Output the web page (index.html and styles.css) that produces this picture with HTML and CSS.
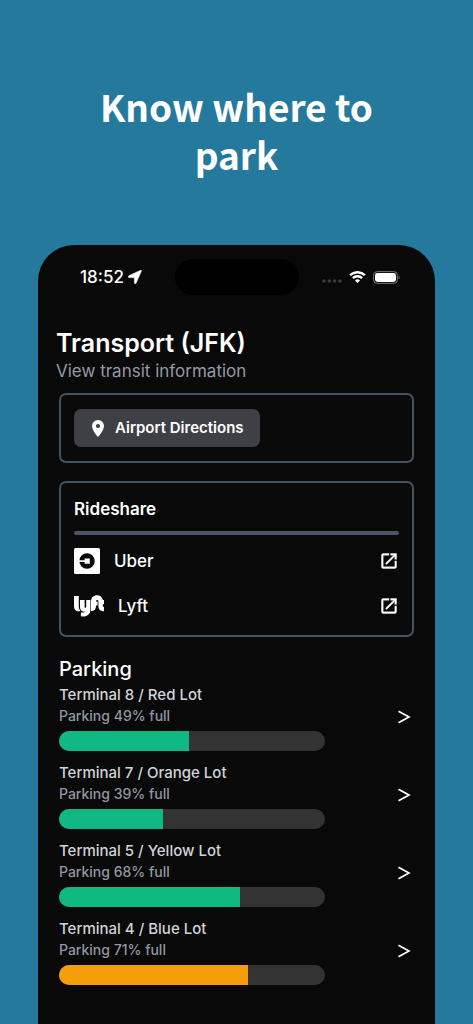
FILE: index.html
```html
<!DOCTYPE html>
<html lang="en">
<head>
<meta charset="utf-8">
<meta name="viewport" content="width=device-width, initial-scale=1">
<title>Know where to park</title>
<link rel="stylesheet" href="styles.css">
</head>
<body>
<svg class="defs" aria-hidden="true">
  <symbol id="open" viewBox="0 0 24 24"><path d="M19 19H5V5h7V3H5a2 2 0 0 0-2 2v14a2 2 0 0 0 2 2h14c1.100 0 2-.9 2-2v-7h-2v7zM14 3v2h3.590l-9.830 9.830 1.410 1.410L19 6.410V10h2V3h-7z" stroke="currentColor" stroke-width=".5"/></symbol>
  <symbol id="next" viewBox="0 0 14 14"><path d="M1.500 1.200 12 7 1.500 12.800" fill="none" stroke="currentColor" stroke-width="1.700"/></symbol>
</svg>
<header class="hero"><h1 class="headline">Know where to park</h1></header>
<div class="phone">
  <div class="status">
    <div class="clock">
      <span>18:52</span>
      <svg class="locate" viewBox="0 0 14 14" aria-hidden="true"><path d="M13.400.9c.3-.6-.1-.8-.6-.6L.9 5.700c-.9.400-.7 1.900.2 1.900h5c.2 0 .3.100.3.300v4.900c0 1 1.300 1.100 1.700.3z" stroke="currentColor" stroke-width=".6"/></svg>
    </div>
    <div class="island"></div>
    <div class="signals">
      <svg class="dots" viewBox="0 0 20 4" aria-hidden="true"><circle cx="2" cy="2" r="1.800"/><circle cx="7.300" cy="2" r="1.800"/><circle cx="12.600" cy="2" r="1.800"/><circle cx="17.900" cy="2" r="1.800"/></svg>
      <svg class="wifi" viewBox="0 0 17 12" aria-hidden="true"><path d="M1.100 4.200a10.600 10.600 0 0 1 14.800 0M3.900 7.100a6.600 6.600 0 0 1 9.200 0" fill="none" stroke="currentColor" stroke-width="2.400"/><path d="M8.500 12 6 9.500a3.600 3.600 0 0 1 5 0z"/></svg>
      <svg class="battery" viewBox="0 0 27 13" aria-hidden="true"><rect x=".6" y=".6" width="23.800" height="11.800" rx="3.600" fill="none" stroke="#77777a" stroke-width="1"/><rect x="2" y="2" width="21" height="9" rx="2.400"/><path d="M25.600 4.500c1.300.5 1.300 3.500 0 4z" fill="#77777a"/></svg>
    </div>
  </div>
  <main class="content">
    <h2 class="title">Transport (JFK)</h2>
    <p class="subtitle">View transit information</p>
    <div class="sections">
      <section class="card">
        <button class="directions" type="button">
          <svg class="pin" viewBox="0 0 12 17" aria-hidden="true"><path fill-rule="evenodd" d="M6 0a6 6 0 0 0-6 6c0 4.500 6 11 6 11s6-6.500 6-11a6 6 0 0 0-6-6zm0 8.100a2.100 2.100 0 1 1 0-4.200 2.100 2.100 0 0 1 0 4.200z"/></svg>
          <span>Airport Directions</span>
        </button>
      </section>
      <section class="card rideshare">
        <h3 class="card-title">Rideshare</h3>
        <hr class="rule">
        <a class="ride" href="#uber">
          <svg class="uber" viewBox="0 0 26 26" aria-hidden="true"><rect width="26" height="26" rx="1.500"/><circle cx="13" cy="13" r="7.700" fill="#090909"/><path d="M5 12.200h5.600V10.500h5.200v5.200h-5.200v-1.700H5z"/></svg>
          <span>Uber</span>
          <svg class="open"><use href="#open"/></svg>
        </a>
        <a class="ride" href="#lyft">
          <svg class="lyft" viewBox="0 0 30 22" aria-hidden="true"><path d="M0 1h4.800v10.200c0 2 .6 3.600 1.700 4.700C3 17.300 0 15.300 0 11.500zM6 5h4.600v6.700c0 1.600 1.600 1.600 1.600 0V5h4.200v10c0 4.500-4.500 7.600-9.500 6.300v-4c1.600.5 3.300.3 4.100-.6C7.800 16.800 6 15 6 12zM17 6.300C17 2.600 19.800.3 23 .3s5.300 1.900 5.900 4.700H30v4.300h-1.200v1.400c0 .8.400 1.200 1.200 1.200v4.300c-3.300 0-5.600-1.800-5.600-5.300V6.500c0-2-2.400-2-2.400 0h1.600v4H22c0 3.600-1.500 5.600-5 5.600z"/></svg>
          <span>Lyft</span>
          <svg class="open"><use href="#open"/></svg>
        </a>
      </section>
      <section class="parking">
        <h3 class="parking-title">Parking</h3>
        <a class="lot" href="#t8">
          <div class="lot-info"><h4 class="lot-name">Terminal 8 / Red Lot</h4><p class="lot-full">Parking 49% full</p><div class="bar"><div class="fill" style="width:49%"></div></div></div>
          <svg class="next" aria-hidden="true"><use href="#next"/></svg>
        </a>
        <a class="lot" href="#t7">
          <div class="lot-info"><h4 class="lot-name">Terminal 7 / Orange Lot</h4><p class="lot-full">Parking 39% full</p><div class="bar"><div class="fill" style="width:39%"></div></div></div>
          <svg class="next" aria-hidden="true"><use href="#next"/></svg>
        </a>
        <a class="lot" href="#t5">
          <div class="lot-info"><h4 class="lot-name">Terminal 5 / Yellow Lot</h4><p class="lot-full">Parking 68% full</p><div class="bar"><div class="fill" style="width:68%"></div></div></div>
          <svg class="next" aria-hidden="true"><use href="#next"/></svg>
        </a>
        <a class="lot" href="#t4">
          <div class="lot-info"><h4 class="lot-name">Terminal 4 / Blue Lot</h4><p class="lot-full">Parking 71% full</p><div class="bar"><div class="fill busy" style="width:71%"></div></div></div>
          <svg class="next" aria-hidden="true"><use href="#next"/></svg>
        </a>
      </section>
    </div>
  </main>
</div>
</body>
</html>
```

FILE: styles.css
```css
* { box-sizing: border-box; margin: 0; padding: 0; }
body {
  display: flex;
  flex-direction: column;
  min-height: 100vh;
  background: #24799d;
  color: #fff;
  font-family: Inter, sans-serif;
}
svg { fill: currentColor; flex: none; }
a { color: inherit; text-decoration: none; }
.defs { display: none; }
.hero { padding: 82px 80px 67px; }
.headline {
  font: 700 37px/48px "Noto Sans CJK SC", sans-serif;
  text-align: center;
}
.phone {
  flex: 1;
  margin: 0 38px;
  background: #090909;
  border-radius: 36px 36px 0 0;
}
.status {
  display: grid;
  grid-template-columns: 1fr 124px 1fr;
  align-items: center;
  padding: 14px 35px 0;
}
.clock { display: flex; align-items: center; gap: 4px; padding-left: 7px; font-size: 17px; font-weight: 500; }
.locate { width: 14px; height: 14px; }
.island { height: 36px; border-radius: 18px; background: #000; }
.signals { display: flex; align-items: center; justify-content: flex-end; gap: 7px; }
.dots { width: 20px; height: 4px; color: #3c3c3e; margin-top: 8px; }
.wifi { width: 17px; height: 12px; }
.battery { width: 27px; height: 13px; }
.content { padding: 32px 18px 30px; }
.title { font-size: 25px; line-height: 32px; font-weight: 600; }
.subtitle { font-size: 17px; line-height: 24px; color: #949aa8; }
.sections { display: flex; flex-direction: column; gap: 18px; padding: 10px 3px 0; }
.card { border: 2px solid #465262; border-radius: 7px; padding: 14px 13px; }
.rideshare { padding-bottom: 7px; }
.directions {
  display: flex;
  align-items: center;
  gap: 11px;
  height: 38px;
  padding: 0 16px 0 18px;
  border: 0;
  border-radius: 7px;
  background: #3f3f46;
  color: #fff;
  font: 600 15px/24px Inter, sans-serif;
}
.pin { width: 12px; height: 17px; }
.card-title { font-size: 17px; line-height: 24px; font-weight: 600; }
.rule { height: 4px; margin: 10px 0 3px; border: 0; border-radius: 2px; background: #4b5563; }
.ride { display: flex; align-items: center; gap: 14px; height: 45px; font-size: 17px; font-weight: 500; }
.uber { width: 26px; height: 26px; }
.lyft { width: 30px; height: 22px; }
.open { width: 20px; height: 20px; margin-left: auto; }
.parking-title { font-size: 20px; line-height: 28px; font-weight: 500; }
.lot { display: flex; align-items: center; height: 78px; padding: 0 3px 10px 0; }
.lot-info { flex: 3; }
.lot-name { font-size: 15px; line-height: 24px; font-weight: 500; color: #d1d3d8; }
.lot-full { font-size: 14px; line-height: 18px; font-weight: 500; color: #9197a4; }
.bar { height: 20px; margin-top: 6px; border-radius: 10px; overflow: hidden; background: #333; }
.fill { height: 100%; background: #10b981; }
.busy { background: #f59e0b; }
.next { width: 14px; height: 14px; margin-left: 72px; }
```
